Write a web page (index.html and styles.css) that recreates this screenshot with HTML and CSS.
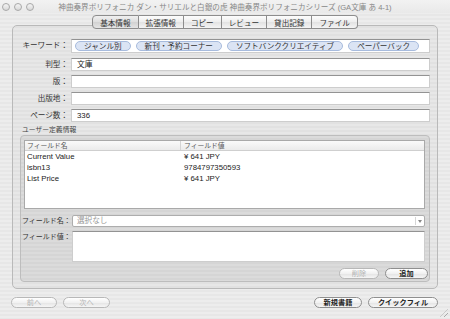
FILE: index.html
```html
<!DOCTYPE html>
<html lang="ja">
<head>
    <meta charset="UTF-8">
    <title>書籍情報</title>
    <link rel="stylesheet" href="styles.css">
</head>
<body>
    <div class="window">
        <div class="titlebar">
            <div class="lights"><span></span><span></span><span></span></div>
            <div class="title">神曲奏界ポリフォニカ ダン・サリエルと白銀の虎 神曲奏界ポリフォニカシリーズ (GA文庫 あ 4-1)</div>
        </div>

        <div class="tabs">
            <span class="tab active">基本情報</span>
            <span class="tab">拡張情報</span>
            <span class="tab">コピー</span>
            <span class="tab">レビュー</span>
            <span class="tab">貸出記録</span>
            <span class="tab">ファイル</span>
        </div>

        <div class="panel">
            <div class="form">
                <label>キーワード：</label>
                <div class="tokens">
                    <span class="token">ジャンル別</span>
                    <span class="token">新刊・予約コーナー</span>
                    <span class="token">ソフトバンククリエイティブ</span>
                    <span class="token">ペーパーバック</span>
                </div>
                <label>判型：</label>
                <div class="field">文庫</div>
                <label>版：</label>
                <div class="field"></div>
                <label>出版地：</label>
                <div class="field"></div>
                <label>ページ数：</label>
                <div class="field">336</div>
            </div>

            <div class="group-title">ユーザー定義情報</div>
            <div class="group">
                <div class="table">
                    <div class="row head"><span>フィールド名</span><span>フィールド値</span></div>
                    <div class="row"><span>Current Value</span><span>¥ 641 JPY</span></div>
                    <div class="row"><span>isbn13</span><span>9784797350593</span></div>
                    <div class="row"><span>List Price</span><span>¥ 641 JPY</span></div>
                </div>
                <div class="edit">
                    <label>フィールド名：</label>
                    <div class="popup">選択なし<span class="arrow"></span></div>
                    <label>フィールド値：</label>
                    <div class="textarea"></div>
                </div>
                <div class="group-buttons">
                    <button class="btn del" disabled>削除</button>
                    <button class="btn add">追加</button>
                </div>
            </div>
        </div>

        <div class="footer">
            <div class="btns">
                <button class="btn prev" disabled>前へ</button>
                <button class="btn next" disabled>次へ</button>
            </div>
            <div class="btns">
                <button class="btn new">新規書籍</button>
                <button class="btn quick">クイックフィル</button>
            </div>
        </div>
        <div class="grip"></div>
    </div>
</body>
</html>
```

FILE: styles.css
```css
* {
    margin: 0;
    padding: 0;
    box-sizing: border-box;
}
body {
    width: 450px;
    height: 319px;
    overflow: hidden;
    font-family: "Liberation Sans", "Noto Sans CJK JP", sans-serif;
    font-size: 8px;
    color: #222;
}
.window {
    position: relative;
    width: 450px;
    height: 319px;
    background: repeating-linear-gradient(to bottom, #ededed 0, #ededed 2px, #e7e7e7 2px, #e7e7e7 4px);
}

/* タイトルバー */
.titlebar {
    height: 13px;
    display: flex;
    align-items: center;
    background: linear-gradient(#f2f2f2, #e9e9e9);
}
.lights {
    display: flex;
    gap: 4px;
    padding-left: 2px;
}
.lights span {
    width: 8px;
    height: 8px;
    border-radius: 50%;
    border: 1px solid #a8a8a8;
    background: linear-gradient(#f4f4f4, #d8d8d8);
}
.title {
    flex: 1;
    text-align: center;
    color: #888;
    font-size: 7.6px;
    padding-right: 34px;
    white-space: nowrap;
}

/* タブ */
.tabs {
    position: relative;
    z-index: 2;
    display: flex;
    justify-content: center;
    margin-top: 2px;
    height: 14px;
}
.tab {
    display: flex;
    align-items: center;
    padding: 0 7px;
    height: 14px;
    font-size: 7.6px;
    color: #333;
    border: 1px solid #8d8d8d;
    border-left: none;
    background: linear-gradient(#fdfdfd, #eeeeee 50%, #e2e2e2 51%, #f4f4f4);
}
.tab:first-child {
    border-left: 1px solid #8d8d8d;
    border-radius: 4px 0 0 4px;
}
.tab:last-child {
    border-radius: 0 4px 4px 0;
}
.tab.active {
    background: linear-gradient(#f0f0f0, #dedede 50%, #d2d2d2 51%, #e4e4e4);
}

/* パネル */
.panel {
    margin: -4px 12px 0 12px;
    height: 264px;
    border: 1px solid #b9b9b9;
    border-radius: 5px;
    background: rgba(0, 0, 0, 0.025);
    padding: 13px 7px 6px 0;
}
.form {
    display: grid;
    grid-template-columns: 55px 1fr;
    column-gap: 3px;
    row-gap: 4px;
}
.form label {
    text-align: right;
    line-height: 13px;
    font-size: 7.6px;
    color: #333;
}
.form label:first-child {
    line-height: 14px;
    margin-bottom: 1px;
}
.tokens {
    height: 14px;
    margin-bottom: 1px;
    display: flex;
    align-items: center;
    gap: 5px;
    padding-left: 3px;
    background: #fff;
    border: 1px solid #cdcdcd;
    border-top-color: #939393;
}
.token {
    height: 10px;
    line-height: 9px;
    padding: 0 8px;
    font-size: 7.6px;
    color: #333;
    background: #dbe4f4;
    border: 1px solid #a7bbdd;
    border-radius: 6px;
}
.field {
    height: 13px;
    line-height: 11px;
    padding-left: 5px;
    background: #fff;
    border: 1px solid #cdcdcd;
    border-top-color: #939393;
    font-size: 7.8px;
}

/* ユーザー定義情報 */
.group-title {
    margin: 3px 0 0 9px;
    height: 10px;
    line-height: 10px;
    font-size: 6.8px;
    color: #444;
}
.group {
    margin-left: 7px;
    height: 147px;
    border: 1px solid #bdbdbd;
    border-radius: 4px;
    background: rgba(0, 0, 0, 0.05);
    padding: 4px 4px 0 3px;
}
.table {
    height: 69px;
    background: #fff;
    border: 1px solid #a9a9a9;
}
.row {
    display: flex;
    height: 11px;
    line-height: 11px;
    font-size: 7.8px;
}
.row span:first-child {
    width: 156px;
    padding-left: 2px;
}
.row span:last-child {
    padding-left: 3px;
}
.row.head {
    height: 10px;
    line-height: 9px;
    font-size: 6.8px;
    color: #555;
    background: linear-gradient(#fafafa, #ebebeb);
    border-bottom: 1px solid #cfcfcf;
}
.row.head span:first-child {
    border-right: 1px solid #d4d4d4;
}
.edit {
    margin-top: 6px;
    display: grid;
    grid-template-columns: 50px 1fr;
    row-gap: 4px;
    margin-left: -2px;
}
.edit label {
    font-size: 7px;
    line-height: 12px;
    color: #333;
    white-space: nowrap;
}
.popup {
    position: relative;
    height: 12px;
    line-height: 10px;
    padding-left: 4px;
    color: #999;
    font-size: 7.6px;
    background: #fff;
    border: 1px solid #adadad;
    border-radius: 2px;
}
.arrow {
    position: absolute;
    right: 2px;
    top: 1px;
    width: 7px;
    height: 8px;
    border-left: 1px solid #d6d6d6;
}
.arrow::after {
    content: "";
    position: absolute;
    left: 2px;
    top: 3px;
    border-left: 2px solid transparent;
    border-right: 2px solid transparent;
    border-top: 3px solid #888;
}
.textarea {
    height: 31px;
    background: #fff;
    border: 1px solid #cdcdcd;
    border-top-color: #939393;
}
.group-buttons {
    margin-top: 6px;
    display: flex;
    justify-content: flex-end;
    gap: 6px;
    margin-right: -3px;
}

/* ボタン */
.btn {
    height: 11px;
    font-family: inherit;
    font-size: 7.2px;
    font-weight: bold;
    color: #222;
    border: 1px solid #8f8f8f;
    border-radius: 6px;
    background: linear-gradient(#ffffff, #f1f1f1 50%, #e3e3e3 51%, #f6f6f6);
    line-height: 9px;
}
.btn:disabled {
    color: #b3b3b3;
    font-weight: normal;
    border-color: #b8b8b8;
}
.del { width: 40px; }
.add { width: 43px; }
.prev { width: 46px; }
.next { width: 47px; }
.new { width: 48px; }
.quick { width: 70px; }

.footer {
    margin-top: 8px;
    display: flex;
    justify-content: space-between;
    padding: 0 12px 0 11px;
}
.btns {
    display: flex;
    gap: 6px;
}
.grip {
    position: absolute;
    right: 2px;
    bottom: 2px;
    width: 8px;
    height: 8px;
    background: repeating-linear-gradient(135deg, transparent 0, transparent 2px, #aaa 2px, #aaa 3px);
    clip-path: polygon(100% 0, 100% 100%, 0 100%);
}
```
